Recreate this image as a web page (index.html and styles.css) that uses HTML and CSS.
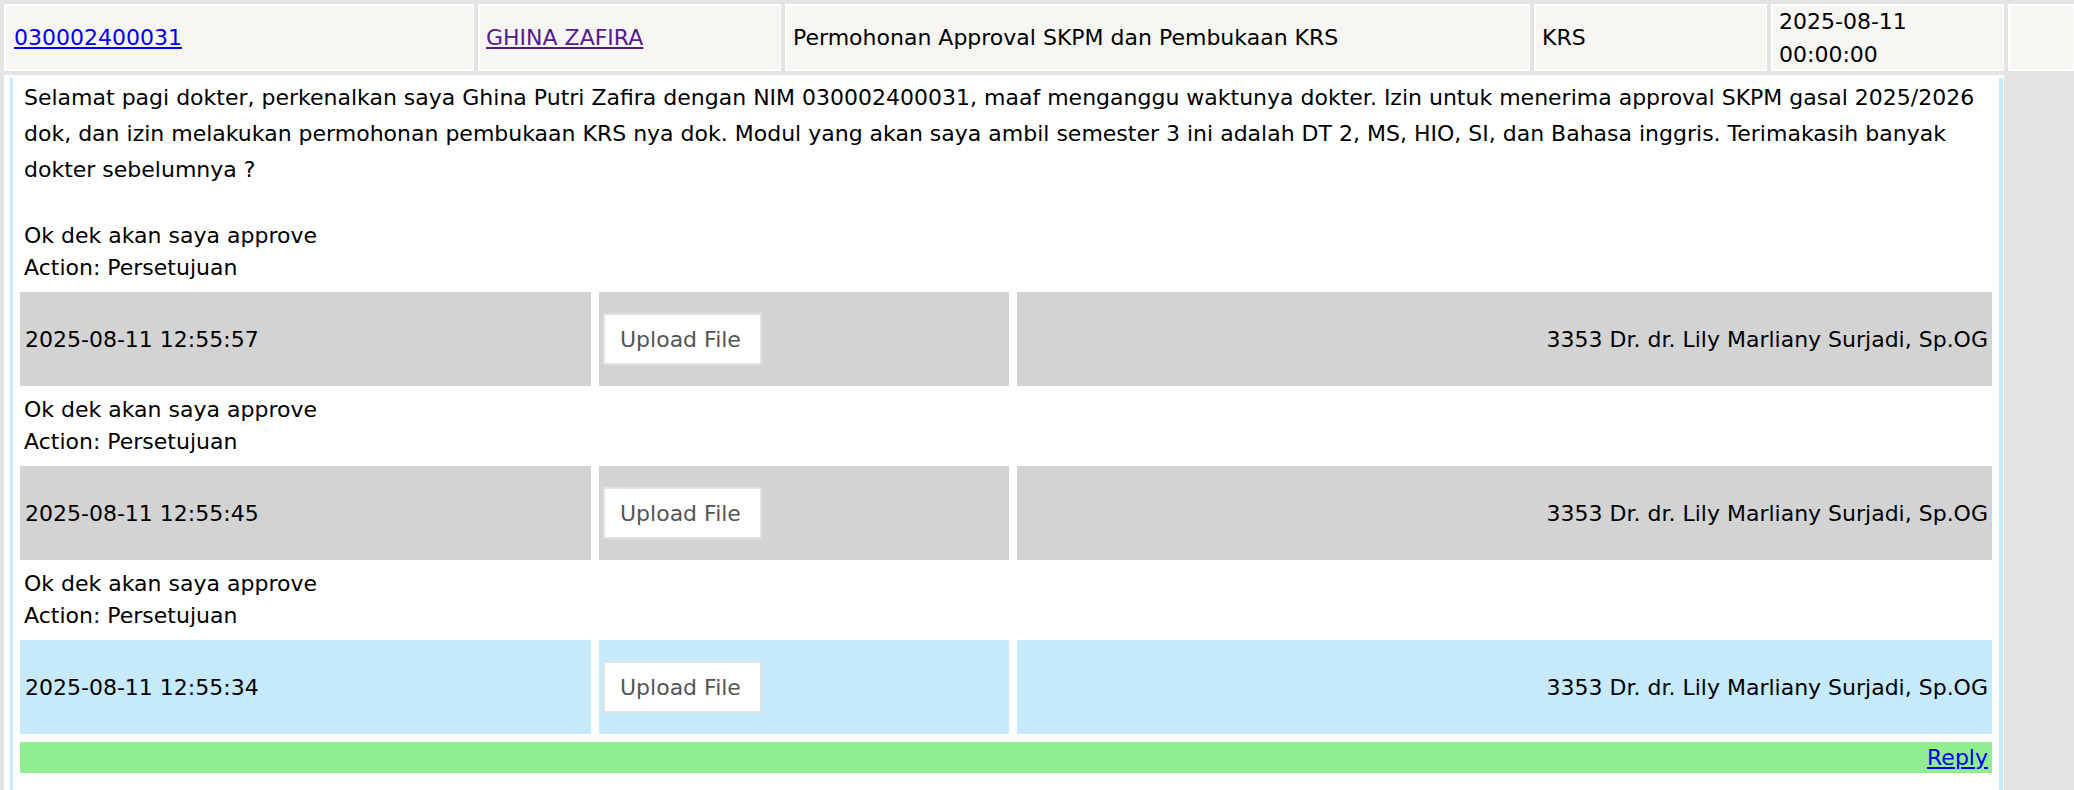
FILE: index.html
```html
<!DOCTYPE html>
<html lang="id">
<head>
<meta charset="utf-8">
<title>Konsultasi</title>
<link rel="stylesheet" href="styles.css">
</head>
<body>
<div class="grid">
  <div class="hc"><a class="lnk" href="#">030002400031</a></div>
  <div class="hc"><a class="lnk visited" href="#">GHINA ZAFIRA</a></div>
  <div class="hc">Permohonan Approval SKPM dan Pembukaan KRS</div>
  <div class="hc">KRS</div>
  <div class="hc">2025-08-11<br>00:00:00</div>
  <div class="hc"></div>
  <div class="body-cell">
    <div class="thread">
      <div class="msg">Selamat pagi dokter, perkenalkan saya Ghina Putri Zafira dengan NIM 030002400031, maaf menganggu waktunya dokter. Izin untuk menerima approval SKPM gasal 2025/2026 dok, dan izin melakukan permohonan pembukaan KRS nya dok. Modul yang akan saya ambil semester 3 ini adalah DT 2, MS, HIO, SI, dan Bahasa inggris. Terimakasih banyak dokter sebelumnya ?</div>

      <div class="note first">Ok dek akan saya approve<br>Action: Persetujuan</div>
      <div class="meta grey">
        <div class="mc">2025-08-11 12:55:57</div>
        <div class="mc up"><button class="upload" type="button">Upload File</button></div>
        <div class="mc right">3353 Dr. dr. Lily Marliany Surjadi, Sp.OG</div>
      </div>

      <div class="note">Ok dek akan saya approve<br>Action: Persetujuan</div>
      <div class="meta grey">
        <div class="mc">2025-08-11 12:55:45</div>
        <div class="mc up"><button class="upload" type="button">Upload File</button></div>
        <div class="mc right">3353 Dr. dr. Lily Marliany Surjadi, Sp.OG</div>
      </div>

      <div class="note">Ok dek akan saya approve<br>Action: Persetujuan</div>
      <div class="meta blue">
        <div class="mc">2025-08-11 12:55:34</div>
        <div class="mc up"><button class="upload" type="button">Upload File</button></div>
        <div class="mc right">3353 Dr. dr. Lily Marliany Surjadi, Sp.OG</div>
      </div>

      <div class="reply-bar"><a class="lnk" href="#">Reply</a></div>
    </div>
  </div>
</div>
</body>
</html>
```

FILE: styles.css
```css
html {
  overflow: hidden;
}
body {
  margin: 0;
  height: 790px;
  background: #e4e4e4;
  font-family: "DejaVu Sans", Verdana, sans-serif;
  font-size: 22px;
  color: #000;
}
.grid {
  display: grid;
  grid-template-columns: 470px 303px 745px 233px 233px 1fr;
  grid-template-rows: 67px auto;
  gap: 4px;
  padding: 4px 0 0 4px;
}
.hc {
  box-sizing: border-box;
  background: #f7f6f3;
  border: 2px solid #ffffff;
  border-right-width: 1px;
  display: flex;
  align-items: center;
  padding: 0 6px;
  line-height: 33px;
}
.hc:first-child {
  padding-left: 8px;
}
.lnk {
  color: #0000ee;
  text-decoration: underline;
}
.lnk.visited {
  color: #551a8b;
}
.body-cell {
  grid-column: 1 / 6;
  background: #ffffff;
  padding: 3px 1px 0 6px;
  height: 712px;
}
.thread {
  border-left: 3px solid #c5e8fa;
  border-right: 4px solid #c5e8fa;
  height: 100%;
  box-sizing: border-box;
}
.msg {
  padding: 2px 0 0 11px;
  line-height: 36px;
}
.note {
  padding-left: 11px;
  line-height: 32px;
}
.note.first {
  margin-top: 32px;
}
.meta {
  display: grid;
  grid-template-columns: 571px 410px 1fr;
  gap: 8px;
  margin: 8px 7px;
  height: 94px;
}
.mc {
  display: flex;
  align-items: center;
  padding: 0 5px;
}
.grey .mc {
  background: #d3d3d3;
}
.blue .mc {
  background: #c6e9fb;
}
.mc.up {
  padding-left: 4px;
}
.mc.right {
  justify-content: flex-end;
  padding-right: 4px;
}
.upload {
  box-sizing: border-box;
  width: 159px;
  height: 52px;
  background: #ffffff;
  border: 2px solid #e2e2e2;
  color: #555555;
  font-family: "DejaVu Sans", Verdana, sans-serif;
  font-size: 22px;
  padding: 0 0 0 15px;
  text-align: left;
}
.reply-bar {
  margin: 1px 7px 0 7px;
  height: 31px;
  line-height: 31px;
  background: #90ee90;
  text-align: right;
  padding-right: 4px;
}
```
